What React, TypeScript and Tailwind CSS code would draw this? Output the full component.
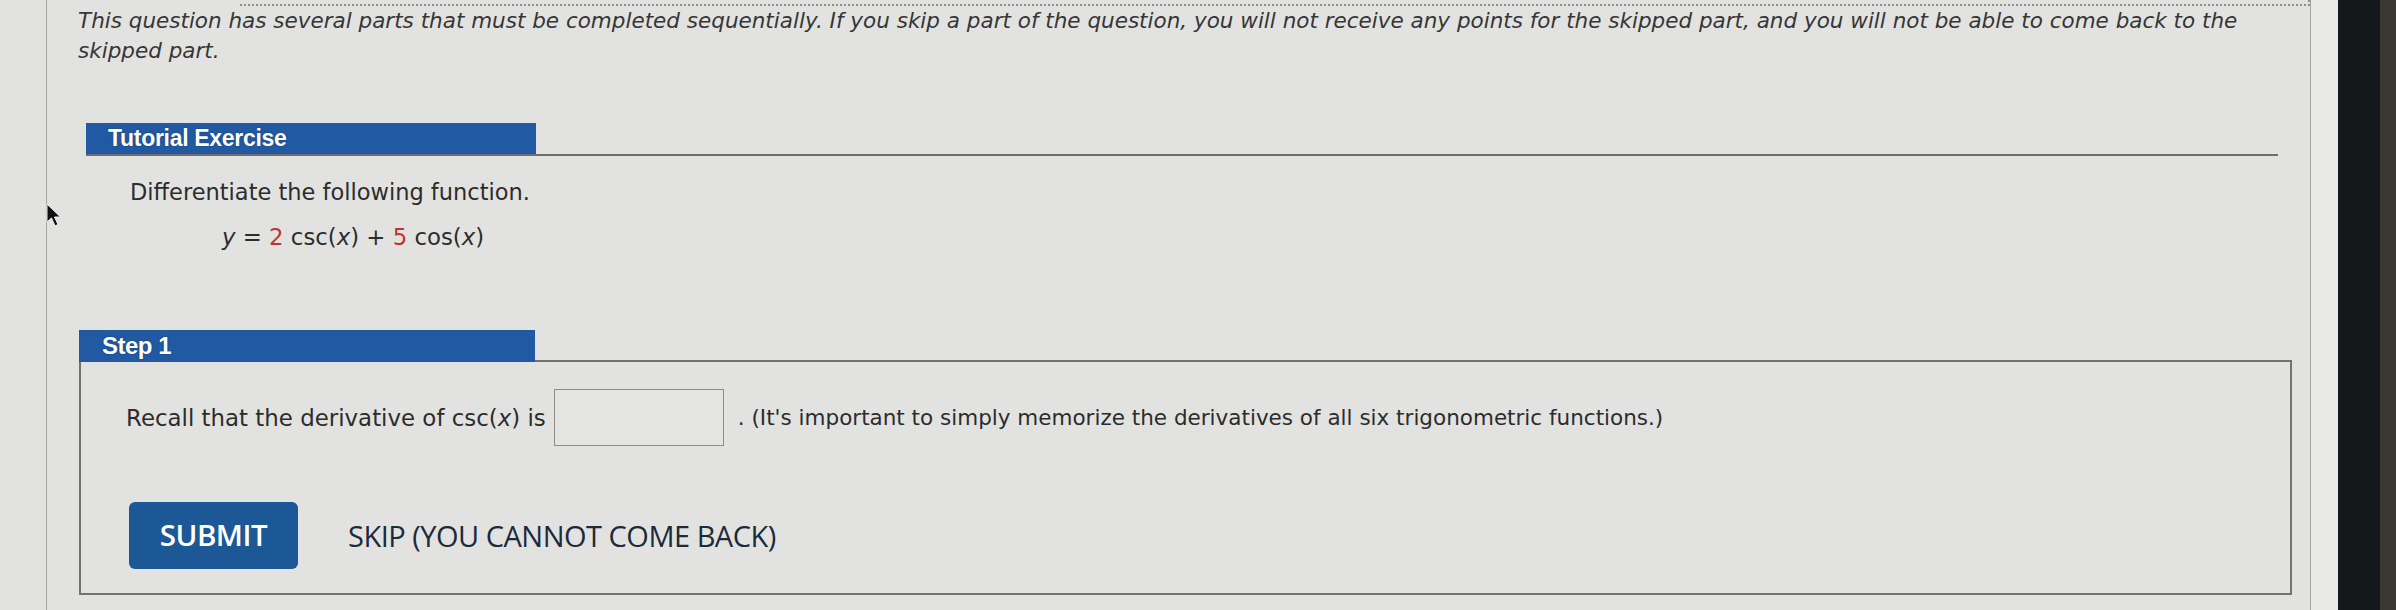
import React from 'react';

const body = { fontFamily: '"DejaVu Sans", Verdana, sans-serif' };
const head = { fontFamily: '"Liberation Sans", Arial, sans-serif' };
const btn = { fontFamily: '"Open Sans", "Noto Sans", sans-serif' };

function Cursor() {
  return (
    <svg className="absolute left-[46px] top-[203px]" width="17" height="25" viewBox="0 0 17 25">
      <path d="M1 1 L1 19 L5.5 15 L9 23 L12 21.5 L8.5 14 L14.5 14 Z" fill="#111" stroke="#f2f2f2" strokeWidth="1" strokeLinejoin="round" />
    </svg>
  );
}

export default function App() {
  return (
    <div className="relative flex w-[2396px] h-[610px] overflow-hidden bg-[#e2e3e1] text-[#2c2c2c]">
      <div className="w-[46px] shrink-0" />

      {/* question container */}
      <div className="w-[2265px] shrink-0 border-x border-[#a5a6a4]">
        {/* focus outline of the element above */}
        <div className="ml-[193px] h-[6px] border-b-2 border-r-2 border-dotted border-[#8e8f8d]" />

        <p className="pl-[31px] text-[21.5px] leading-[30px] italic text-[#363636]" style={body}>
          <span className="whitespace-nowrap">
            This question has several parts that must be completed sequentially. If you skip a part of the question, you will not receive any points for the skipped part, and you will not be able to come back to the
          </span>
          <br />
          skipped part.
        </p>

        {/* tutorial header */}
        <div className="mt-[57px] ml-[39px] mr-[32px] flex border-b-2 border-[#6e6f6d]">
          <div className="w-[450px] h-[31px] flex items-center pl-[22px] bg-[#2159a3]">
            <span className="text-[23px] font-bold tracking-[-0.3px] text-white [text-shadow:0_0_2px_rgba(0,0,0,0.35)]" style={head}>
              Tutorial Exercise
            </span>
          </div>
        </div>

        <p className="mt-[22px] pl-[83px] text-[22.5px] leading-[28px]" style={body}>
          Differentiate the following function.
        </p>
        <p className="mt-[17px] pl-[175px] text-[22.8px] leading-[28px]" style={body}>
          <i>y</i> = <span className="text-[#bf3434]">2</span> csc(<i>x</i>) + <span className="text-[#bf3434]">5</span> cos(<i>x</i>)
        </p>

        {/* step 1 */}
        <div className="mt-[79px] ml-[32px] mr-[18px]">
          <div className="flex">
            <div className="w-[456px] h-[32px] shrink-0 flex items-center pl-[23px] bg-[#2159a3]">
              <span className="text-[24px] font-bold tracking-[-0.5px] text-white [text-shadow:0_0_2px_rgba(0,0,0,0.35)]" style={head}>
                Step 1
              </span>
            </div>
            <div className="flex-1 border-b-2 border-[#727371]" />
          </div>
          <div className="border-x-2 border-b-2 border-[#727371] pt-[27px] pb-[24px] pl-[45px]">
            <div className="flex items-center leading-[28px]" style={body}>
              <span className="text-[22.9px]">Recall that the derivative of csc(<i>x</i>) is</span>
              <span className="ml-[8px] w-[170px] h-[57px] border border-[#8c8d8b] bg-[#e4e5e3]" />
              <span className="ml-[14px] text-[21.5px]">. (It's important to simply memorize the derivatives of all six trigonometric functions.)</span>
            </div>
            <div className="mt-[56px] flex items-center" style={btn}>
              <button className="ml-[3px] w-[169px] h-[67px] rounded-[6px] bg-[#1d5896] text-white text-[29.5px] font-semibold tracking-[-0.5px]">
                SUBMIT
              </button>
              <span className="ml-[50px] text-[29px] font-medium tracking-[-0.5px] text-[#1c2a3c]">SKIP (YOU CANNOT COME BACK)</span>
            </div>
          </div>
        </div>
      </div>

      <div className="w-[27px] shrink-0 bg-[#e9eae8]" />
      <div className="w-[42px] shrink-0 bg-[#14181b]" />
      <div className="flex-1 bg-[#3b3732]" />

      <Cursor />
    </div>
  );
}
